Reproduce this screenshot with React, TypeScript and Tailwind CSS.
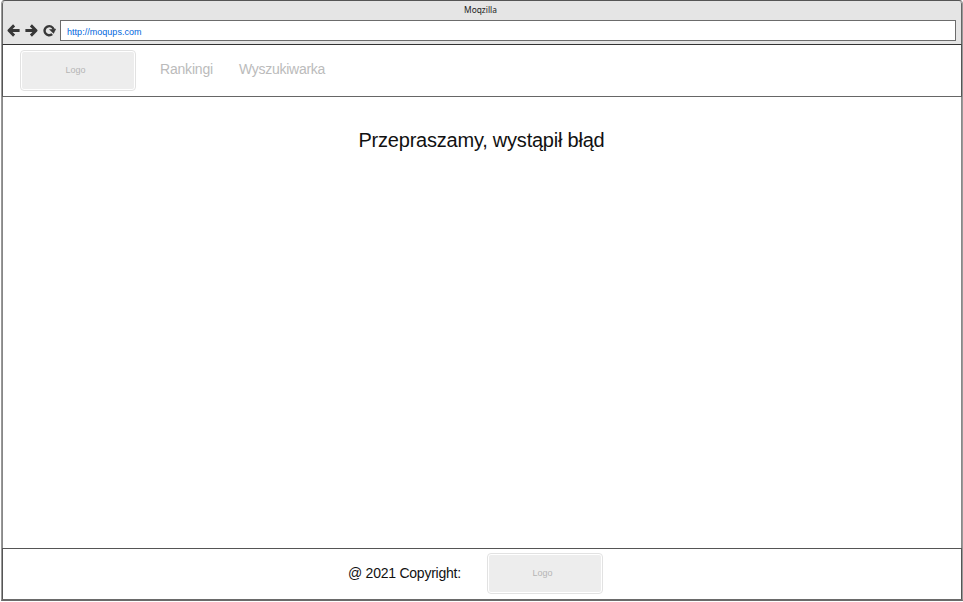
const ink = "#383838";

function ArrowIcon({ flip = false }: { flip?: boolean }) {
  return (
    <svg width="13" height="13" viewBox="0 0 13 13" className={flip ? "-scale-x-100" : ""} fill="none" stroke={ink} strokeWidth="2.9" strokeLinejoin="round">
      <path d="M7.1 1.4 L2 6.5 L7.1 11.6" />
      <path d="M2.4 6.5 H12.6" />
    </svg>
  );
}

function ReloadIcon() {
  return (
    <svg width="13" height="13" viewBox="0 0 13 13">
      <path d="M9.2 10.2 A4.6 4.6 0 1 1 10.6 5.4" fill="none" stroke={ink} strokeWidth="2.4" />
      <path d="M6.4 5.6 L12.8 5 L10.6 9.4 Z" fill={ink} stroke={ink} strokeWidth="0.4" />
    </svg>
  );
}

function Logo() {
  return (
    <div className="h-[41px] w-[116px] shrink-0 rounded-[4px] border border-[#e2e2e2] bg-white p-px">
      <div className="flex h-full items-center justify-center rounded-[2px] bg-[#ededed] pr-[5px] text-[9px] leading-none text-[#b5b5b5]">
        Logo
      </div>
    </div>
  );
}

export default function App() {
  return (
    <div className="h-[602px] w-[963px] overflow-hidden bg-white pl-px font-['Liberation_Sans',sans-serif]">
      <div className="flex h-[601px] w-[962px] flex-col overflow-hidden rounded-t-[4px] border-x border-t border-b-2 border-x-[#999999] border-b-[#6a6a6a] border-t-[#555555]">
        <header className="flex h-[44px] shrink-0 flex-col rounded-t-[3px] border-x border-b border-x-[#666666] border-b-[#333333] bg-[#e5e5e5]">
          <div className="h-[19px] pr-[3px] pt-[3px] text-center font-['Noto_Sans',sans-serif] text-[8.4px] leading-[12px] text-[#222222]">
            Moqzilla
          </div>
          <div className="flex h-[21px] items-center pl-[4px] pr-[5px]">
            <div className="flex w-[53px] shrink-0 gap-[5px]">
              <ArrowIcon />
              <ArrowIcon flip />
              <ReloadIcon />
            </div>
            <div className="flex h-[21px] flex-1 items-center border border-[#6c6c6c] bg-white pl-[6px] pt-[3px] text-[9px] leading-[12px] tracking-[0.03px] text-[#0066dd]">
              http://moqups.com
            </div>
          </div>
        </header>
        <nav className="flex h-[52px] shrink-0 items-center border-x border-b border-x-[#555555] border-b-[#666666] pl-[17px] text-[14px] text-[#bbbbbb]">
          <Logo />
          <span className="ml-[24px] pb-[3px] leading-none tracking-[-0.2px]">Rankingi</span>
          <span className="ml-[26px] pb-[3px] leading-none tracking-[-0.26px]">Wyszukiwarka</span>
        </nav>
        <main className="flex-1 border-x border-x-[#888888] pr-px pt-[31px] text-center text-[20px] leading-[24px] tracking-[-0.22px] text-[#111111]">
          Przepraszamy, wystąpił błąd
        </main>
        <footer className="flex h-[51px] shrink-0 items-center border-x border-t border-x-[#555555] border-t-[#555555] pb-px pl-[345px] text-[14px] text-[#111111]">
          <span className="w-[139px] pb-px leading-none tracking-[-0.24px]">@ 2021 Copyright:</span>
          <Logo />
        </footer>
      </div>
    </div>
  );
}
